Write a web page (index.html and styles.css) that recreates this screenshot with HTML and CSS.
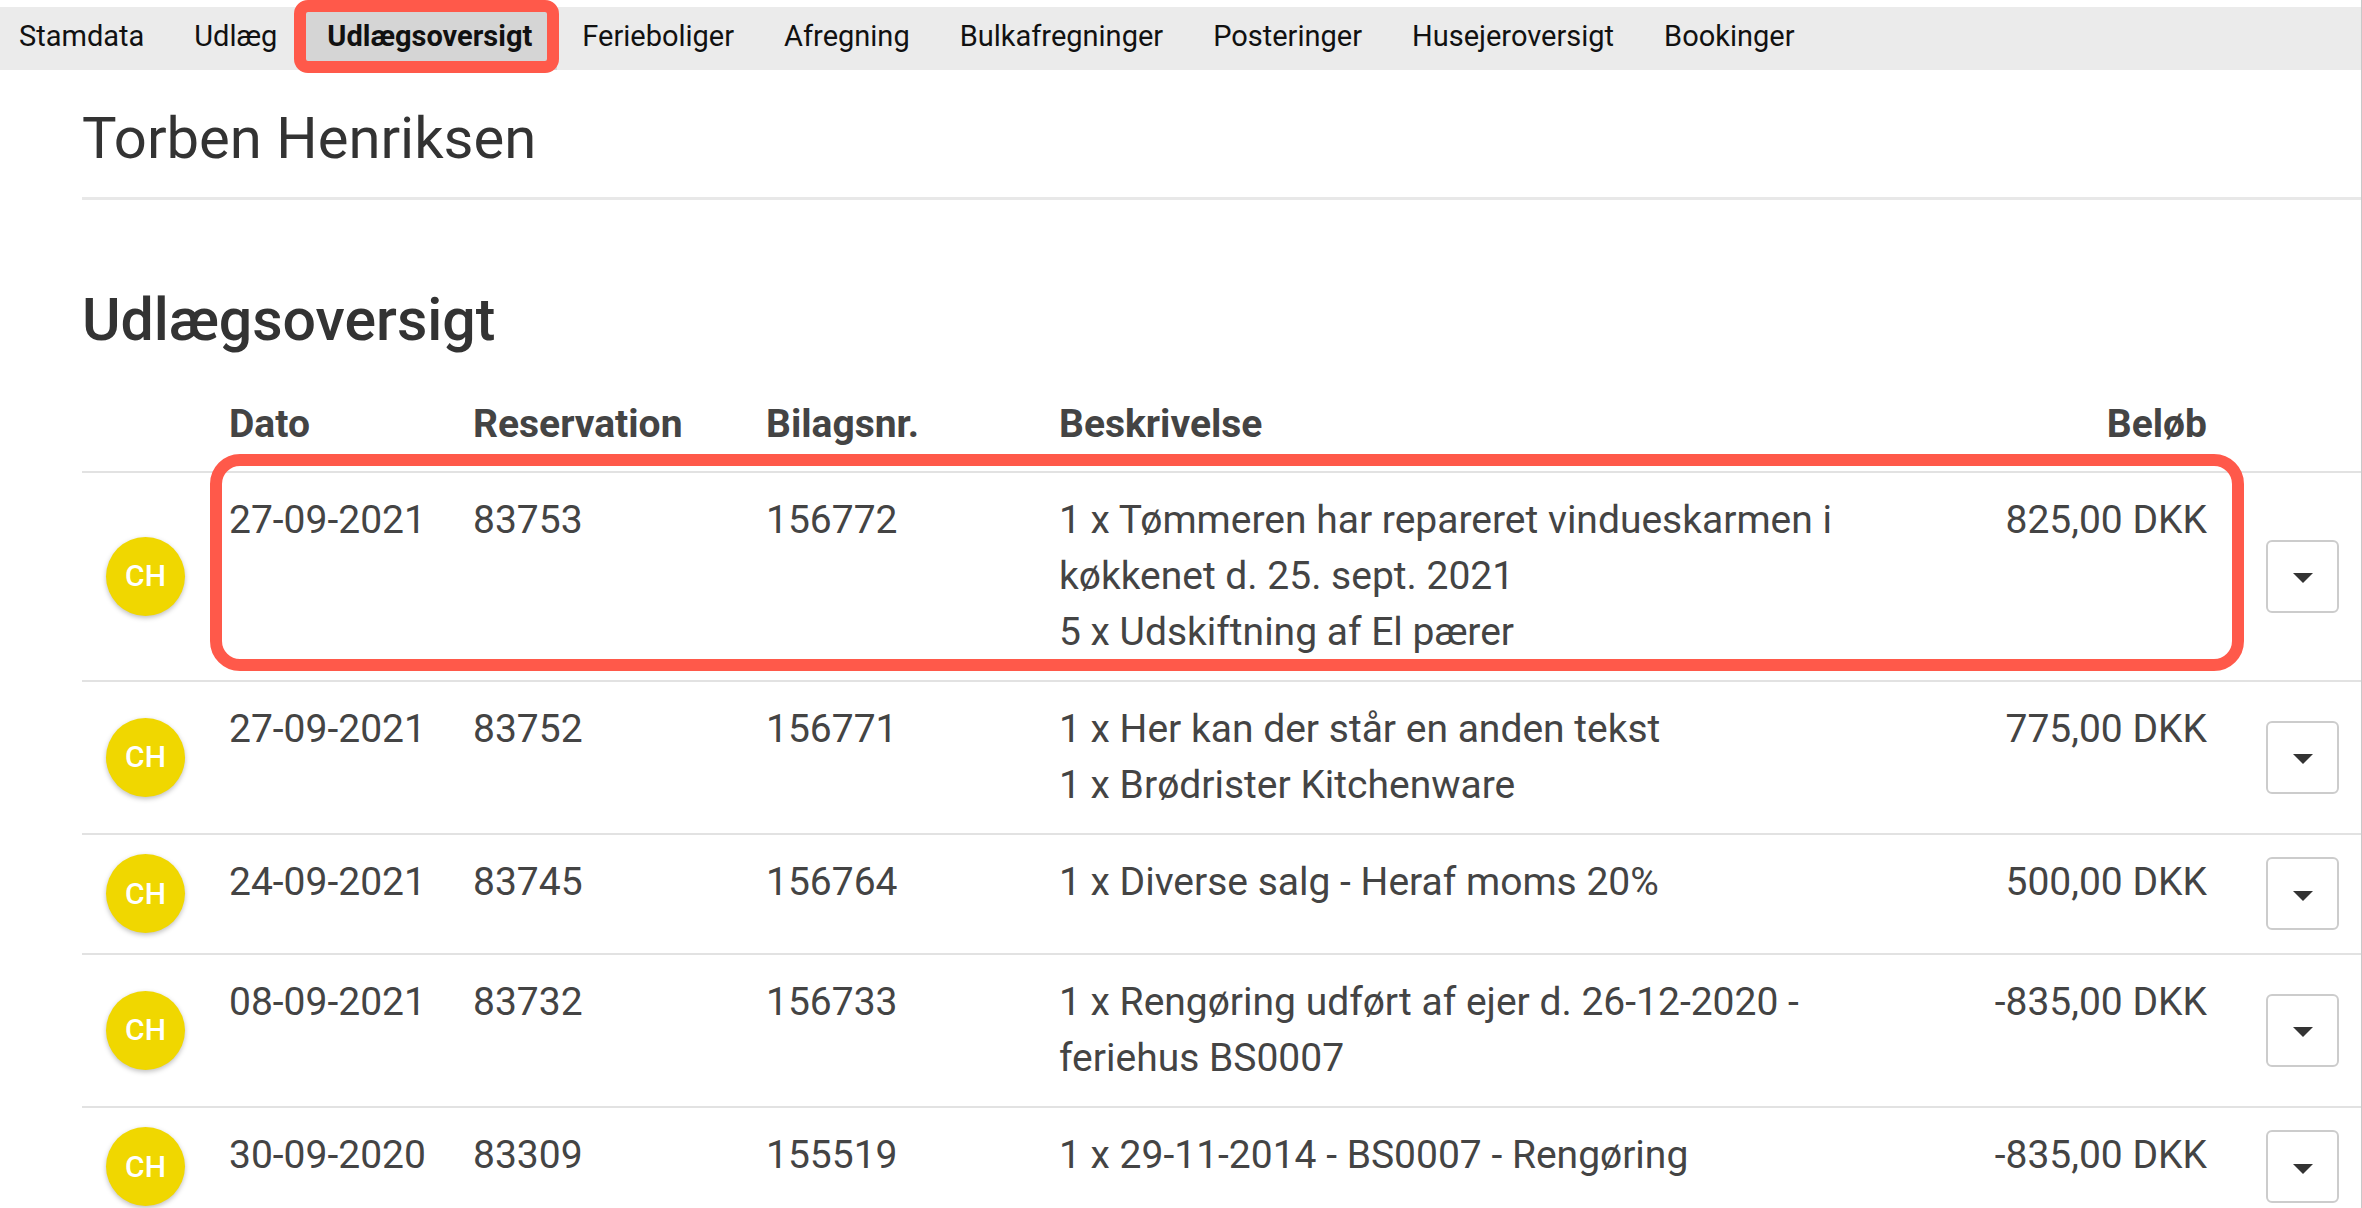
FILE: index.html
```html
<!DOCTYPE html>
<html lang="da">
<head>
    <meta charset="UTF-8">
    <title>Udlægsoversigt</title>
    <link rel="stylesheet" href="styles.css">
</head>
<body>
    <nav class="tabs">
        <a href="#">Stamdata</a>
        <a href="#">Udlæg</a>
        <a href="#" class="active">Udlægsoversigt</a>
        <a href="#">Ferieboliger</a>
        <a href="#">Afregning</a>
        <a href="#">Bulkafregninger</a>
        <a href="#">Posteringer</a>
        <a href="#">Husejeroversigt</a>
        <a href="#">Bookinger</a>
    </nav>
    <main class="content">
        <h1>Torben Henriksen</h1>
        <h2>Udlægsoversigt</h2>
        <table class="expenses">
            <thead>
                <tr>
                    <th class="user"></th>
                    <th class="date">Dato</th>
                    <th class="number">Reservation</th>
                    <th class="number">Bilagsnr.</th>
                    <th class="text">Beskrivelse</th>
                    <th class="amount">Beløb</th>
                    <th class="action"></th>
                </tr>
            </thead>
            <tbody>
                <tr class="marked">
                    <td class="user"><span class="avatar">CH</span></td>
                    <td>27-09-2021</td>
                    <td>83753</td>
                    <td>156772</td>
                    <td>1 x Tømmeren har repareret vindueskarmen i køkkenet d. 25. sept. 2021<br>5 x Udskiftning af El pærer</td>
                    <td class="amount">825,00 DKK</td>
                    <td class="action"><button class="menu" aria-label="Menu"><span class="caret"></span></button></td>
                </tr>
                <tr>
                    <td class="user"><span class="avatar">CH</span></td>
                    <td>27-09-2021</td>
                    <td>83752</td>
                    <td>156771</td>
                    <td>1 x Her kan der står en anden tekst<br>1 x Brødrister Kitchenware</td>
                    <td class="amount">775,00 DKK</td>
                    <td class="action"><button class="menu" aria-label="Menu"><span class="caret"></span></button></td>
                </tr>
                <tr>
                    <td class="user"><span class="avatar">CH</span></td>
                    <td>24-09-2021</td>
                    <td>83745</td>
                    <td>156764</td>
                    <td>1 x Diverse salg - Heraf moms 20%</td>
                    <td class="amount">500,00 DKK</td>
                    <td class="action"><button class="menu" aria-label="Menu"><span class="caret"></span></button></td>
                </tr>
                <tr>
                    <td class="user"><span class="avatar">CH</span></td>
                    <td>08-09-2021</td>
                    <td>83732</td>
                    <td>156733</td>
                    <td>1 x Rengøring udført af ejer d. 26-12-2020 - feriehus BS0007</td>
                    <td class="amount">-835,00 DKK</td>
                    <td class="action"><button class="menu" aria-label="Menu"><span class="caret"></span></button></td>
                </tr>
                <tr>
                    <td class="user"><span class="avatar">CH</span></td>
                    <td>30-09-2020</td>
                    <td>83309</td>
                    <td>155519</td>
                    <td>1 x 29-11-2014 - BS0007 - Rengøring</td>
                    <td class="amount">-835,00 DKK</td>
                    <td class="action"><button class="menu" aria-label="Menu"><span class="caret"></span></button></td>
                </tr>
            </tbody>
        </table>
    </main>
</body>
</html>
```
FILE: styles.css
```css
*{
    box-sizing: border-box;
    margin: 0;padding: 0;
}
html{
    overflow-x: hidden;
}
body{
    padding-top: 7px;
    border-right: 1px solid #c8c8c8;
    background-color: #fff;
    color: #444;
    font-family: Roboto, sans-serif;
    font-size: 39px;
    line-height: 56px;
}
.tabs{
    display: flex;
    height: 63px;
    margin-left: -6px;
    background-color: #ebebeb;
}
.tabs a{
    position: relative;
    padding: 0 25px;
    color: #111;
    font-size: 29px;
    line-height: 58px;
    text-decoration: none;
}
.tabs .active{
    background-color: #d5d5d5;
    font-weight: bold;
}
/* red frames */
.tabs .active::after,
.marked .action::after{
    content: "";
    position: absolute;
    border: 12px solid #ff594a;
}
.tabs .active::after{
    top: -7px;
    right: -2px;
    bottom: -3px;
    left: -8px;
    border-radius: 14px;
}
.content{
    padding-left: 82px;
}
h1{
    height: 130px;
    padding-top: 32px;
    border-bottom: 3px solid #e8e8e8;
    color: #333;
    font-size: 58px;
    font-weight: 400;
    line-height: 72px;
}
h2{
    margin: 84px 0 24px;
    color: #333;
    font-size: 59px;
    font-weight: 500;
    line-height: 72px;
}
.expenses{
    width: 100%;
    table-layout: fixed;
    border-collapse: collapse;
}
.expenses th{
    padding: 16px 22px 19px;
    text-align: left;
    font-weight: bold;
}
.expenses td{
    padding: 19px 22px 20px;
    border-top: 2px solid #e2e2e2;
    vertical-align: top;
}
.expenses .user{
    width: 125px;
    padding-left: 24px;
    vertical-align: middle;
}
.expenses .date{
    width: 244px;
}
.expenses .number{
    width: 293px;
}
.expenses .text{
    width: 38%;
}
.expenses .amount{
    text-align: right;
}
.expenses .action{
    width: 132px;
    text-align: right;
    vertical-align: middle;
}
.marked{
    position: relative;
}
.marked .action::after{
    top: -18px;
    right: 117px;
    bottom: 10px;
    left: 128px;
    border-radius: 30px;
}
.avatar{
    display: flex;
    align-items: center;
    justify-content: center;
    width: 79px;
    height: 79px;
    border-radius: 50%;
    background-color: #f0d700;
    box-shadow: 0 2px 5px rgba(0,0,0,.25);
    color: #fff;
    font-size: 30px;
    font-weight: 500;
}
.menu{
    display: inline-flex;
    align-items: center;
    justify-content: center;
    width: 73px;
    height: 73px;
    border: 2px solid #ccc;
    border-radius: 6px;
    background-color: #fff;
    vertical-align: middle;
}
.caret{
    margin-top: 4px;
    border: 10px solid transparent;
    border-top-color: #333;
    border-bottom: 0;
}
```
